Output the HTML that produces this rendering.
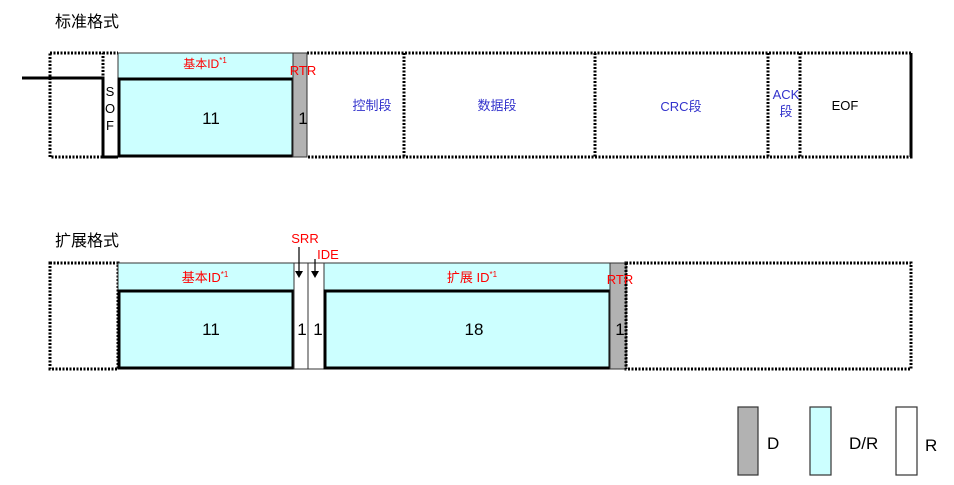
<!DOCTYPE html>
<html><head><meta charset="utf-8"><style>body{margin:0;background:#fff}svg{display:block}</style></head><body>
<svg width="954" height="485" viewBox="0 0 954 485" xmlns="http://www.w3.org/2000/svg" font-family="Liberation Sans, Noto Sans CJK SC, sans-serif">
<text x="55" y="27" font-size="16" fill="#000">标准格式</text>
<text x="55" y="246" font-size="16" fill="#000">扩展格式</text>
<g fill="none" stroke="#000" stroke-width="3" stroke-dasharray="2 1.5">
<rect x="50" y="53" width="53" height="104"/>
<path d="M103 53H118"/>
<path d="M307 53H911V157H307M404 53V157M595 53V157M768 53V157M800 53V157M911 53V157"/>
<rect x="50" y="263" width="68" height="106"/>
<rect x="626" y="263" width="285" height="106"/>
</g>
<path d="M22 78H103V157H118" stroke="#000" stroke-width="3" fill="none"/>
<rect x="118" y="53" width="175" height="25" fill="#ccffff" stroke="#333" stroke-width="1"/>
<rect x="119" y="79" width="174" height="77" fill="#ccffff" stroke="#000" stroke-width="3"/>
<rect x="293" y="53" width="14" height="104" fill="#b2b2b2" stroke="#333" stroke-width="1"/>
<text x="205" y="68" font-size="12" fill="#f00" text-anchor="middle">基本ID<tspan font-size="8" dy="-5">*1</tspan></text>
<text x="303" y="75" font-size="13" fill="#f00" text-anchor="middle">RTR</text>
<text x="211" y="124" font-size="17" text-anchor="middle">11</text>
<text x="303" y="124" font-size="17" text-anchor="middle">1</text>
<text x="110" y="96" font-size="13" text-anchor="middle">S</text>
<text x="110" y="113" font-size="13" text-anchor="middle">O</text>
<text x="110" y="130" font-size="13" text-anchor="middle">F</text>
<g fill="#3333cc" font-size="13" text-anchor="middle">
<text x="372" y="110">控制段</text>
<text x="497" y="110">数据段</text>
<text x="681" y="111">CRC段</text>
<text x="786" y="99">ACK</text>
<text x="786" y="116">段</text>
</g>
<text x="845" y="110" font-size="13" text-anchor="middle">EOF</text>
<rect x="118" y="263" width="176" height="27" fill="#ccffff" stroke="#333" stroke-width="1"/>
<rect x="119" y="291" width="174" height="77" fill="#ccffff" stroke="#000" stroke-width="3"/>
<rect x="294" y="263" width="14" height="106" fill="#fff" stroke="#333" stroke-width="1"/>
<rect x="308" y="263" width="16" height="106" fill="#fff" stroke="#333" stroke-width="1"/>
<rect x="324" y="263" width="286" height="27" fill="#ccffff" stroke="#333" stroke-width="1"/>
<rect x="325" y="291" width="285" height="77" fill="#ccffff" stroke="#000" stroke-width="3"/>
<rect x="610" y="263" width="16" height="106" fill="#b2b2b2" stroke="#333" stroke-width="1"/>
<path d="M626 263V369" stroke="#000" stroke-width="3" stroke-dasharray="2 1.5"/>
<text x="205" y="282" font-size="13" fill="#f00" text-anchor="middle">基本ID<tspan font-size="8" dy="-5">*1</tspan></text>
<text x="472" y="282" font-size="13" fill="#f00" text-anchor="middle">扩展 ID<tspan font-size="8" dy="-5">*1</tspan></text>
<text x="620" y="284" font-size="13" fill="#f00" text-anchor="middle">RTR</text>
<text x="305" y="243" font-size="13" fill="#f00" text-anchor="middle">SRR</text>
<text x="328" y="259" font-size="13" fill="#f00" text-anchor="middle">IDE</text>
<path d="M299 247V272M315 259V272" stroke="#000" stroke-width="1.2"/>
<path d="M295 271h8l-4 7zM311 271h8l-4 7z" fill="#000"/>
<text x="211" y="335" font-size="17" text-anchor="middle">11</text>
<text x="302" y="335" font-size="17" text-anchor="middle">1</text>
<text x="318" y="335" font-size="17" text-anchor="middle">1</text>
<text x="474" y="335" font-size="17" text-anchor="middle">18</text>
<text x="620" y="335" font-size="17" text-anchor="middle">1</text>
<rect x="738" y="407" width="20" height="68" fill="#b2b2b2" stroke="#333" stroke-width="1.2"/>
<rect x="810" y="407" width="21" height="68" fill="#ccffff" stroke="#333" stroke-width="1.2"/>
<rect x="896" y="407" width="21" height="68" fill="#fff" stroke="#333" stroke-width="1.2"/>
<text x="767" y="449" font-size="17">D</text>
<text x="849" y="449" font-size="17">D/R</text>
<text x="925" y="451" font-size="17">R</text>
</svg>
</body></html>
